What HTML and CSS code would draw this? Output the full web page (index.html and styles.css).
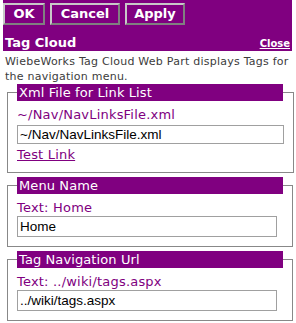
FILE: index.html
```html
<!DOCTYPE html>
<html>
	<head>
		<meta charset="utf-8" />
		<title>Tag Cloud</title>
		<link rel="stylesheet" href="styles.css">
	</head>
	<body>
		<div id="panel">
			<div class="toolbar">
				<button class="btn ok">OK</button>
				<button class="btn cancel">Cancel</button>
				<button class="btn apply">Apply</button>
			</div>
			<div class="title">
				<span class="name">Tag Cloud</span>
				<a class="close" href="#">Close</a>
			</div>
		</div>
		<div class="desc">WiebeWorks Tag Cloud Web Part displays Tags for the navigation menu.</div>

		<fieldset class="group">
			<legend>Xml File for Link List</legend>
			<div class="label">~/Nav/NavLinksFile.xml</div>
			<input class="field wide" type="text" value="~/Nav/NavLinksFile.xml" />
			<a class="test" href="#">Test Link</a>
		</fieldset>

		<fieldset class="group">
			<legend>Menu Name</legend>
			<div class="label">Text: Home</div>
			<input class="field" type="text" value="Home" />
		</fieldset>

		<fieldset class="group">
			<legend>Tag Navigation Url</legend>
			<div class="label">Text: ../wiki/tags.aspx</div>
			<input class="field" type="text" value="../wiki/tags.aspx" />
		</fieldset>
	</body>
</html>
```

FILE: styles.css
```css
body{
	margin: 0;
	font-family: "DejaVu Sans", Verdana, sans-serif;
	background: white;
}
#panel{
	margin: 0 4px 0 3px;
	padding-top: 3px;
	background: #800080;
}
.toolbar{
	display: flex;
	gap: 5px;
}
.btn{
	height: 22px;
	margin: 0;
	padding: 0;
	background: #800080;
	color: white;
	font: bold 13px/18px "DejaVu Sans", Verdana, sans-serif;
	border: 2px solid;
	border-color: #c8c8c8 #808080 #808080 #c8c8c8;
}
.ok{ width: 42px; }
.cancel{ width: 70px; }
.apply{ width: 60px; }
.title{
	display: flex;
	justify-content: space-between;
	align-items: baseline;
	padding: 10px 2px 1px 2px;
	color: white;
}
.name{
	font-size: 13px;
	font-weight: bold;
	line-height: 15px;
}
.close{
	color: white;
	font-size: 10px;
	font-weight: bold;
	line-height: 12px;
}
.desc{
	margin: 3px 2px 0 5px;
	font-size: 11px;
	line-height: 15px;
	letter-spacing: 0.24px;
	color: #3c3c3c;
}
.group{
	margin: 0 4px 0 7px;
	padding: 0 9px 9px 9px;
	border: 1px solid #888;
}
.group + .group{
	margin-top: 4px;
}
.group legend{
	box-sizing: border-box;
	width: 266px;
	padding: 0 2px;
	background: #800080;
	color: white;
	font-size: 13px;
	line-height: 17px;
	letter-spacing: 0.1px;
}
.label{
	margin-top: 6px;
	color: #800080;
	font-size: 13px;
	line-height: 16px;
	letter-spacing: 0.2px;
}
.field{
	display: block;
	box-sizing: border-box;
	width: 260px;
	height: 21px;
	margin: 0;
	padding: 0 2px;
	border: 1px solid #a0a0a0;
	font: 13.5px "Liberation Sans", Arial, sans-serif;
	color: black;
}
.field.wide{
	width: 267px;
	height: 19px;
	margin-top: 2px;
}
.test{
	display: inline-block;
	margin-top: 1px;
	color: #800080;
	font-size: 13px;
	line-height: 16px;
	letter-spacing: 0.2px;
}
```
